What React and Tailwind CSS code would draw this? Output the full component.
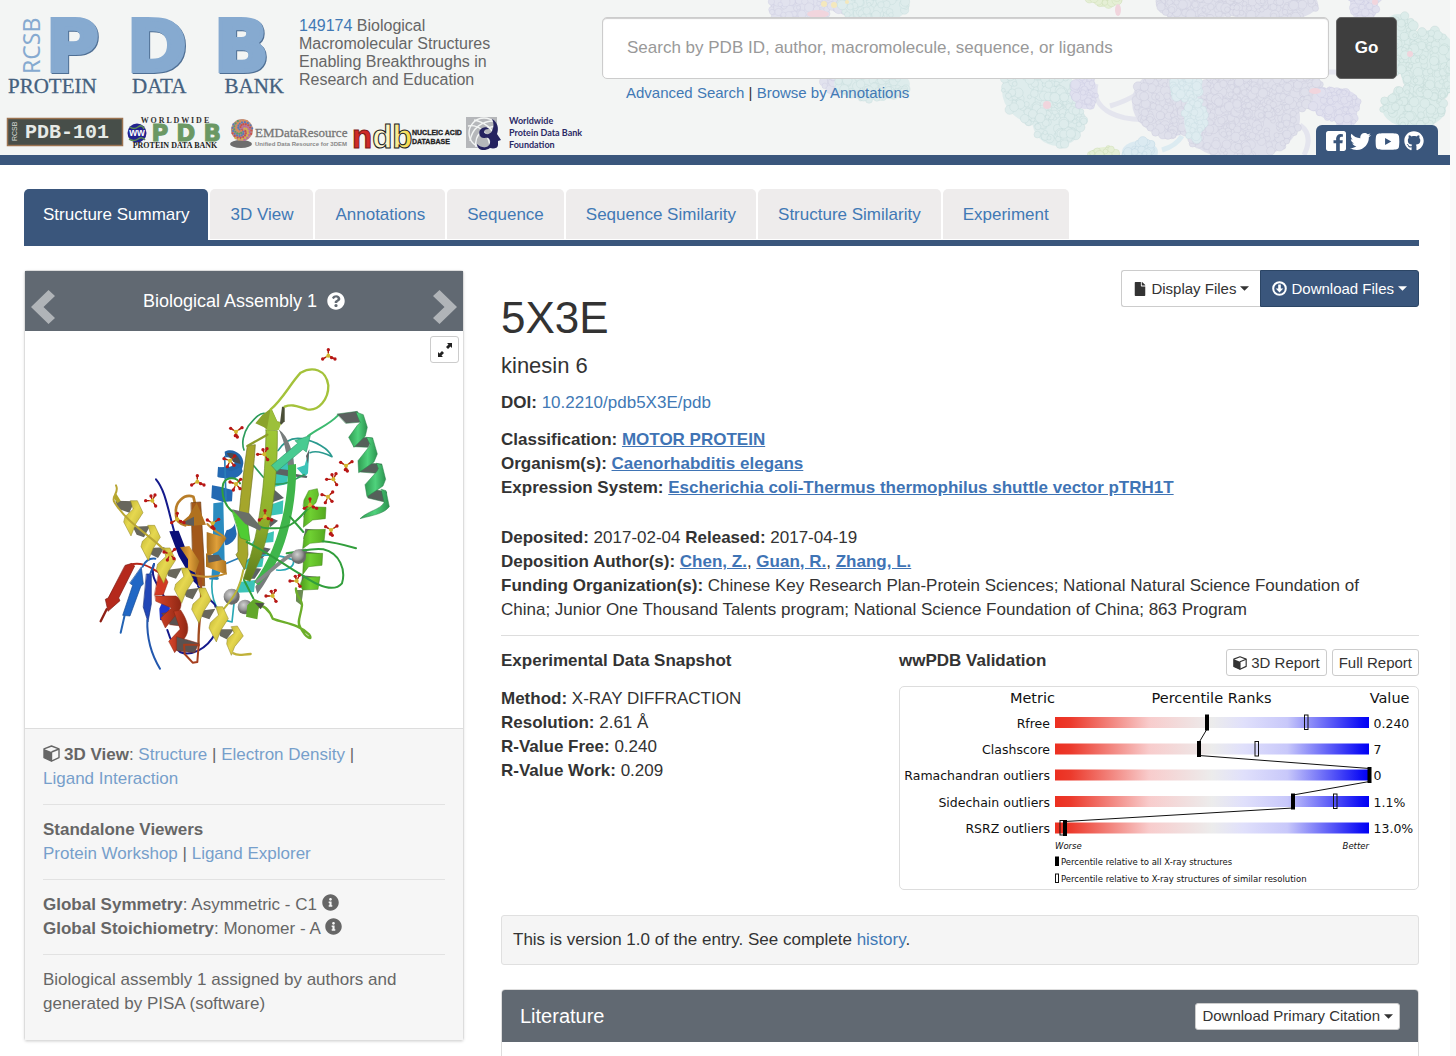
import React from "react";
import { FaFile, FaGithub, FaInfoCircle, FaQuestionCircle, FaTwitter, FaYoutube } from "react-icons/fa";

const SANS = "Liberation Sans, Arial, sans-serif";
const SERIF = "Liberation Serif, Times New Roman, serif";
const DEJAVU = "DejaVu Sans, Verdana, sans-serif";

const link = "text-[#4179b5] hover:underline";
const softLink = "text-[#769fcb] hover:underline";
const boldLink = "font-bold text-[#3f74b5] underline";

/* ---------- header artwork ---------- */

const BLOBS = [
  { fill: "#e1e2ee", stroke: "#c9c9dc", parts: [[800, 4, 30, 22], [845, -4, 25, 14], [860, 84, 38, 10]] },
  { fill: "#deecec", stroke: "#bfd6d6", parts: [[875, 2, 34, 22], [872, 84, 38, 16]] },
  { fill: "#deecec", stroke: "#bcd3d3", parts: [[1038, 90, 36, 34], [1058, 120, 26, 26]] },
  { fill: "#e0e0ef", stroke: "#c4c4dc", parts: [[1085, 92, 12, 17]] },
  { fill: "#dfe0eb", stroke: "#c4c6d8", parts: [[1200, 0, 44, 20], [1270, 4, 48, 18], [1170, 102, 38, 34], [1240, 118, 60, 42], [1262, 90, 60, 26]] },
  { fill: "#deecf0", stroke: "#c2d6dc", parts: [[1186, 88, 16, 12], [1194, 118, 10, 22]] },
  { fill: "#e0e0ee", stroke: "#c6c6dc", parts: [[1336, 104, 24, 16], [1346, 120, 9, 14], [1364, 2, 14, 22]] },
  { fill: "#dcecea", stroke: "#b9d0cf", parts: [[1398, 44, 20, 30], [1430, 66, 30, 36], [1414, 108, 32, 20]] },
  { fill: "#e5efd5", stroke: "#c6d6a8", parts: [[1104, 156, 14, 9], [1104, -2, 16, 6]] },
  { fill: "#dbeaf1", stroke: "#b9d2de", parts: [[1140, 152, 18, 11]] },
];

function bumps(parts, seed) {
  let s = seed * 7919 + 13;
  const rnd = () => {
    s = (s * 16807) % 2147483647;
    return s / 2147483647;
  };
  const out = [];
  parts.forEach(([cx, cy, rx, ry]) => {
    const n = Math.round((rx * ry) / 9) + 14;
    for (let i = 0; i < n; i++) {
      const a = rnd() * Math.PI * 2;
      const d = Math.sqrt(rnd());
      out.push([cx + Math.cos(a) * d * rx, cy + Math.sin(a) * d * ry, 2 + rnd() * 3]);
    }
  });
  return out;
}

function HeaderArt() {
  return (
    <svg className="pointer-events-none absolute right-0 top-0" width="700" height="155" viewBox="750 0 700 155" aria-hidden="true">
      <g fill="none" stroke="#e4e5ee" strokeWidth="5">
        <path d="M1096 84C1090 110 1120 124 1160 118M1110 106C1130 100 1146 90 1152 78M1300 125q14 10 4 30M1328 72h20" />
        <path stroke="#dcebf1" d="M1162 150q14 -4 20 -14" />
      </g>
      {BLOBS.map((b, i) => (
        <g key={i}>
          {b.parts.map(([cx, cy, rx, ry], j) => (
            <ellipse key={j} cx={cx} cy={cy} rx={rx} ry={ry} fill={b.fill} />
          ))}
          {bumps(b.parts, i + 1).map(([x, y, r], j) => (
            <circle key={j} cx={x} cy={y} r={r} fill={b.fill} stroke={b.stroke} strokeWidth="0.5" strokeOpacity="0.65" />
          ))}
        </g>
      ))}
      <g fill="#f1d5dd">
        <ellipse cx="1118" cy="10" rx="3" ry="6" />
        <ellipse cx="818" cy="14" rx="11" ry="4" />
        <circle cx="1047" cy="105" r="4" />
        <circle cx="1410" cy="54" r="3" />
        <ellipse cx="1315" cy="91" rx="6" ry="3" />
        <circle cx="1375" cy="2" r="3" />
      </g>
      <g fill="#f4e8bc">
        <circle cx="834" cy="5" r="3" />
        <circle cx="824" cy="4" r="3" />
        <circle cx="847" cy="2" r="2" />
      </g>
    </svg>
  );
}

function PdbLogo() {
  return (
    <svg className="overflow-visible" width="278" height="77" viewBox="7 17 278 77" role="img" aria-label="RCSB Protein Data Bank">
      <text transform="translate(40 74) rotate(-90)" fontFamily="Noto Sans, sans-serif" fontSize="23" fill="#86aad0">RCSB</text>
      <g className="drop-shadow-[1px_1px_0_#4f6f94]" fontFamily={DEJAVU} fontWeight="700" fontSize="72" fill="#86aad0" stroke="#86aad0" strokeWidth="4" strokeLinejoin="miter">
        <text x="46" y="71">P</text>
        <text x="127" y="71">D</text>
        <text x="214" y="71">B</text>
      </g>
      <g fontFamily={SERIF} fontSize="21" fill="#44617f" stroke="#44617f" strokeWidth="0.3">
        <text x="8" y="93">PROTEIN</text>
        <text x="132" y="93">DATA</text>
        <text x="284" y="93" textAnchor="end">BANK</text>
      </g>
    </svg>
  );
}

function Pdb101Logo() {
  return (
    <svg className="overflow-visible" width="116" height="30" viewBox="7 117 116 30" role="img" aria-label="PDB-101">
      <rect x="7.500" y="118.500" width="115" height="27" fill="#474e49" stroke="#9b7350" strokeWidth="1.500" />
      <text transform="translate(17 141) rotate(-90)" fontFamily={SANS} fontSize="7" fill="#d8dcd8">RCSB</text>
      <text x="25" y="138" fontFamily="Liberation Mono, monospace" fontWeight="700" fontSize="20" fill="#e6eae6">PDB-101</text>
    </svg>
  );
}

function WwPdbLogo() {
  return (
    <svg className="overflow-visible" width="95" height="33" viewBox="127 117 95 33" role="img" aria-label="Worldwide Protein Data Bank">
      <text x="175" y="123" textAnchor="middle" fontFamily={SERIF} fontWeight="700" fontSize="8" fill="#333">W O R L D W I D E</text>
      <circle cx="137" cy="133" r="9.500" fill="#22228f" />
      <path d="M130 127q4 3 8 0t6 2M129 139q5 3 9 0t7 1" fill="none" stroke="#5b8f55" strokeWidth="1.500" />
      <text x="137" y="136" textAnchor="middle" fontFamily={SANS} fontWeight="700" fontSize="10" fill="#fff">ww</text>
      <text x="221" y="141" textAnchor="end" fontFamily={DEJAVU} fontWeight="700" fontSize="23" fill="#6b9863" stroke="#6b9863" strokeWidth="1">P D B</text>
      <text x="175" y="148" textAnchor="middle" fontFamily={SERIF} fontWeight="700" fontSize="8" fill="#222">PROTEIN DATA BANK</text>
    </svg>
  );
}

const DOT_COLORS = ["#c94f4f", "#5a9d6a", "#d8b24a", "#5a79b8", "#b56aa5", "#d98b55"];

function EmDataLogo() {
  const dots = [];
  for (let i = 0; i < 70; i++) {
    const a = i * 2.4;
    const d = Math.sqrt(i / 70) * 10.5;
    dots.push([242 + Math.cos(a) * d, 130 + Math.sin(a) * d, DOT_COLORS[(i * 5 + (i >> 2)) % 6]]);
  }
  return (
    <svg className="overflow-visible" width="120" height="33" viewBox="229 117 120 33" role="img" aria-label="EMDataResource">
      <ellipse cx="241" cy="144" rx="11" ry="4" fill="#6d6d6d" />
      <circle cx="242" cy="130" r="11" fill="#c0907c" />
      {dots.map(([x, y, c], i) => (
        <circle key={i} cx={x} cy={y} r="1.100" fill={c} />
      ))}
      <text x="255" y="137" fontFamily={SERIF} fontSize="13" fill="#777" stroke="#777" strokeWidth="0.300">EMDataResource</text>
      <text x="255" y="146" fontFamily={SANS} fontWeight="700" fontSize="6" fill="#888">Unified Data Resource for 3DEM</text>
    </svg>
  );
}

function NdbLogo() {
  return (
    <svg className="overflow-visible" width="108" height="33" viewBox="354 117 108 33" role="img" aria-label="Nucleic Acid Database">
      <defs>
        <linearGradient id="ndb-d">
          <stop offset="0" stopColor="#f4d83a" />
          <stop offset=".5" stopColor="#fffbe0" />
          <stop offset="1" stopColor="#f4d83a" />
        </linearGradient>
      </defs>
      <text x="353" y="148" fontFamily={SANS} fontWeight="700" fontSize="33" fill="#d02a26" stroke="#7c1a18" strokeWidth="1">
        n<tspan fill="url(#ndb-d)" stroke="#222">db</tspan>
      </text>
      <g fontFamily={SANS} fontWeight="700" fontSize="7" fill="#222" stroke="#222" strokeWidth="0.300">
        <text x="413" y="135">NUCLEIC ACID</text>
        <text x="413" y="144">DATABASE</text>
      </g>
    </svg>
  );
}

function FoundationLogo() {
  return (
    <svg className="overflow-visible" width="120" height="34" viewBox="465 117 120 34" role="img" aria-label="Worldwide Protein Data Bank Foundation">
      <rect x="466" y="117" width="31" height="31" fill="#b5b7ba" />
      <g fill="none" stroke="#f3f5f4" strokeWidth="1.400">
        <circle cx="484" cy="133" r="15" />
        <path d="M470 141C472 128 482 121 494 121M476 147C474 134 484 127 497 126M468 126C478 124 488 132 490 146M474 120C484 122 492 128 496 138" />
      </g>
      <path d="M492 119C498 122 499 129 497 134L501 140 498 141V145C498 148 494 149 490 148C484 152 477 150 477 144C482 149 489 148 490 143C491 139 488 137 485 138C480 139 478 133 480 130C482 127 487 126 489 129C486 129 484 130 484 132C485 135 490 135 492 131C494 127 494 123 492 119z" fill="#25235f" />
      <g fontFamily="Lato, sans-serif" fontWeight="700" fontSize="9" fill="#2b2a66">
        <text x="509" y="124">Worldwide</text>
        <text x="509" y="136">Protein Data Bank</text>
        <text x="509" y="148">Foundation</text>
      </g>
    </svg>
  );
}

/* ---------- small glyphs ---------- */

const Caret = () => (
  <svg width="9" height="5" viewBox="0 0 10 5" className="ml-1 inline-block align-middle" aria-hidden="true">
    <path d="M0 0h10L5 5z" fill="currentColor" />
  </svg>
);

const Chevron = ({ flip }) => (
  <svg width="24" height="34" viewBox="0 0 24 34" aria-hidden="true">
    <path d={flip ? "M6.500 0L24 17 6.500 34 0 28 11.500 17 0 6z" : "M17.500 0L0 17 17.500 34 24 28 12.500 17 24 6z"} fill="#b0b4b8" />
  </svg>
);

const Cube = ({ size, className }) => (
  <svg width={size} height={size} viewBox="0 0 17 17" className={className} aria-hidden="true">
    <path d="M8.500 1L16 3.800V12.600L8.500 16.200 1 12.600V3.800z" fill="none" stroke="currentColor" strokeWidth="1.400" strokeLinejoin="round" />
    <path d="M1 4L8.500 7V16.200L1 12.600z" fill="currentColor" />
    <path d="M8.500 7L16 4M8.500 7V16" stroke="currentColor" strokeWidth="1.400" />
  </svg>
);

const FacebookGlyph = () => (
  <svg width="20" height="20" viewBox="0 128 1536 1536" aria-hidden="true">
    <path
      fill="currentColor"
      d="M1368 128q70 0 119 49t49 119v1200q0 70-49 119t-119 49h-308v-595h199l30-232h-229V689q0-56 23.500-84t91.500-28l122-1V369q-63-9-178-9-136 0-217.500 80T777 666v171H577v232h200v595H168q-70 0-119-49T0 1496V296q0-70 49-119t119-49z"
    />
  </svg>
);

const DownloadGlyph = () => (
  <svg width="15" height="15" viewBox="0 0 15 15" className="mr-1" aria-hidden="true">
    <circle cx="7.500" cy="7.500" r="6.300" fill="none" stroke="currentColor" strokeWidth="2" />
    <path d="M6.200 3.500h2.600v4h2.500L7.500 11.500 3.700 7.500h2.500z" fill="currentColor" />
  </svg>
);

const ExpandGlyph = () => (
  <svg width="16" height="16" viewBox="0 0 16 16" aria-hidden="true">
    <path d="M10 1h5v5l-1.500-1.500L11 7 9 5l2.500-2.500zM6 15H1v-5l1.500 1.500L5 9l2 2-2.500 2.500z" fill="#222" />
  </svg>
);

/* ---------- molecule ---------- */

const SULFATES = [
  [468, 275, 0], [450, 362, 1], [352, 425, 2], [217, 482, 3], [468, 432, 1], [553, 343, 3], [555, 530, 2],
  [398, 550, 0], [270, 642, 1], [578, 768, 3], [292, 538, 2], [745, 47, 2], [798, 377, 0], [760, 418, 3],
  [744, 470, 1], [690, 495, 2], [753, 570, 0], [650, 723, 3],
];

const ARMS = [
  [[-16, -10], [18, -12], [4, 16], [-2, 12]],
  [[-18, -6], [14, -14], [12, 14], [-8, 18]],
  [[0, -18], [-17, 10], [20, 10], [10, 6]],
  [[-20, 0], [8, -17], [10, 16], [-4, -14]],
];

function Sulfate({ x, y, kind }) {
  return (
    <g>
      {ARMS[kind].map(([dx, dy], i) => (
        <g key={i}>
          <path d={`M${x} ${y}l${dx} ${dy}`} stroke="#c9ae2c" strokeWidth="4" />
          <path d={`M${x + dx / 2} ${y + dy / 2}L${x + dx} ${y + dy}`} stroke="#b01818" strokeWidth="4" />
          <circle cx={x + dx} cy={y + dy} r="5" fill="#b81616" />
        </g>
      ))}
      <circle cx={x} cy={y} r="6" fill="#d3b62f" />
    </g>
  );
}

const YELLOW_TURNS = [[152, 482], [204, 556], [250, 624], [304, 684], [356, 744], [408, 800]];

function Molecule() {
  return (
    <svg className="mx-auto block w-full max-w-[438px]" viewBox="25 331 438 397" role="img" aria-label="Biological assembly 1 of 5X3E">
      <defs>
        <linearGradient id="m-green" x1="0" x2="1"><stop offset="0" stopColor="#2f9c52" /><stop offset=".5" stopColor="#4fd27c" /><stop offset="1" stopColor="#2c9450" /></linearGradient>
        <linearGradient id="m-lime" x1="0" x2="1"><stop offset="0" stopColor="#4c9a1c" /><stop offset=".4" stopColor="#6fd032" /><stop offset="1" stopColor="#54a81f" /></linearGradient>
        <linearGradient id="m-yellow" x1="0" x2="1" y2="1"><stop offset="0" stopColor="#b3a62a" /><stop offset=".45" stopColor="#e6d850" /><stop offset="1" stopColor="#b5a82c" /></linearGradient>
        <linearGradient id="m-red" x1="0" x2="1"><stop offset="0" stopColor="#d8452a" /><stop offset="1" stopColor="#8f2814" /></linearGradient>
        <linearGradient id="m-orange" x1="0" x2="1"><stop offset="0" stopColor="#a86f1e" /><stop offset=".5" stopColor="#dfa03a" /><stop offset="1" stopColor="#a8701f" /></linearGradient>
        <linearGradient id="m-olive" x1="0" y1="0" x2="0" y2="1"><stop offset="0" stopColor="#9fc737" /><stop offset=".6" stopColor="#8fae2b" /><stop offset="1" stopColor="#5f7d1c" /></linearGradient>
        <radialGradient id="m-zinc" cx=".4" cy=".35"><stop offset="0" stopColor="#d0d0d0" /><stop offset=".7" stopColor="#969696" /><stop offset="1" stopColor="#6a6a6a" /></radialGradient>
      </defs>
      <g transform="translate(80 340) scale(.33333)" strokeLinejoin="round" strokeLinecap="round">
        {/* cyan helix and strands at the back */}
        <g fill="#3cc4b8">
          <path d="M576 378l46-14 18-12v50l-56 12zM580 405l45-5-3 32-38 8zM575 493l35-12-2 40-38 6zM530 590l52-16-2 32-66 6zM495 660l56-6-4 26-58 8zM478 726l48-6-4 36-52 2z" />
          <path d="M650 384l24-8 14-48-4 72-10 10z" />
        </g>
        <g fill="#5c6263">
          <path d="M583 385l48 6-6 18-42-8zM580 446l32 28-38 14zM562 528l32 14-24 20zM532 618l40 8-26 30-30-10zM678 348l10-20-4 44zM648 402l34 6-2 6-32-4zM502 682l42 4-20 30-28 0z" />
        </g>
        <g fill="none" strokeWidth="5">
          <path stroke="#2a9a8f" d="M594 332C615 300 640 292 665 296C710 305 745 325 756 350C740 342 710 330 690 338" />
          <path stroke="#2d9c5c" d="M560 222C540 212 520 240 505 258C490 280 484 310 492 330M520 376L550 412M585 432C620 436 650 415 672 404" />
          <path stroke="#2aa8b5" d="M500 665C520 640 590 640 640 660C645 680 620 694 590 690M398 710C390 760 400 800 440 842L456 846L462 790" />
        </g>
        {/* blue helix */}
        <path d="M434 335C460 320 492 345 490 370C486 400 470 420 448 416L414 412L418 382L450 380C470 378 470 352 436 352z" fill="#2264a8" />
        <path d="M440 340C465 335 480 350 482 372L460 366C450 352 446 350 440 340z" fill="#474b52" />
        <path d="M414 380l40 14 30-14 4 14c-8 16-24 24-44 22l-32-6zM396 436l24 4 38 10-2 34-28 2-34-12zM440 570c16-2 26-16 24-22l6 34c-2 18-20 32-34 34l-6-22z" fill="#2369b2" />
        <path d="M400 490l30-4 4 176-22 58-18-4 4-60z" fill="#2a8bbf" />
        <path d="M434 350l4 130M390 716l24 0M440 670l32-14" stroke="#2a7db8" strokeWidth="5" fill="none" />
        {/* navy strand and coils */}
        <g fill="none" stroke="#141a8c" strokeWidth="6">
          <path d="M228 418C255 450 262 500 282 572M354 738C380 780 410 790 406 800M406 880C380 930 330 950 300 936C280 920 268 890 262 870M256 776C230 730 210 710 222 672" />
        </g>
        <path d="M268 574l28-2 26 68 34 84-2 14-14-14-44-76z" fill="#0b0f78" />
        <path d="M238 806l14-32 18 30-10 38-20-2z" fill="#1f36cf" />
        {/* green and lime strands */}
        <path d="M596 268C640 300 656 390 634 500C618 610 580 700 532 762L526 740C590 650 626 520 626 430C626 360 616 310 596 268z" fill="#777c7c" />
        <path d="M624 376l24-4c4 120-30 250-68 310l-44 54-14-10c60-80 104-210 102-350z" fill="#3fb54b" />
        <path d="M676 632C630 630 580 690 532 724" stroke="#858888" strokeWidth="11" fill="none" />
        <path d="M502 318l24-4c-6 110-30 220-22 330l-10 46-26-46 6-8c-2-110 14-220 28-318z" fill="#a5a62b" stroke="#6f741f" strokeWidth="2" />
        <path d="M558 270l34 2c2 150-20 300-52 386l-30 66-20-8c50-140 66-290 68-446z" fill="url(#m-olive)" stroke="#6c8a25" strokeWidth="2" />
        <path d="M526 250l20-24 28-22 18 40 10 2-36 28-14-12z" fill="#8ba32c" />
        <path d="M572 204l20 42 12 4-8 20-36 2z" fill="#9cc03a" />
        <path d="M600 250l6-50 8 0 0 44-10 10z" fill="#4b4f38" />
        <path d="M502 318l60-34" stroke="#8c9c2a" strokeWidth="7" />
        <path d="M572 208C605 182 632 130 662 98C698 78 738 88 745 136C746 178 716 214 682 208C656 202 640 190 614 200" stroke="#a4c23a" strokeWidth="7" fill="none" />
        {/* blue-green arrow and right helix */}
        <path d="M575 376l78-66-8-8 46-16-12 50-10-8-78 66z" fill="#48cb91" stroke="#319a6c" strokeWidth="2" />
        <path d="M684 288C715 264 745 256 774 226" stroke="#3dba70" strokeWidth="6" fill="none" />
        <g stroke="#287d46" strokeWidth="1.500">
          <path d="M772 222l60-8 16 32-50 4z" fill="#5c615f" />
          <path d="M820 290l58 4-14 28-42-2z" fill="#55605a" />
          <path d="M844 368l62 4-16 28-50-4z" fill="#55605a" />
          <path d="M862 444l58 12-6 30-50-12z" fill="#55605a" />
          <path d="M828 216l22 8 12 38-6 26-34 34-16-30 26-36 8-8z" fill="url(#m-green)" />
          <path d="M860 292l18 2 14 48-10 24-46 32-2-36 32-40 4-8z" fill="url(#m-green)" />
          <path d="M890 370l16 4 11 44-8 20-48 32-6-36 36-40 4-8z" fill="url(#m-green)" />
          <path d="M904 448l14 4 10 48c-16 20-40 24-88 36 24-24 60-26 72-48z" fill="url(#m-green)" />
        </g>
        {/* lime helix */}
        <g fill="#666b66">
          <path d="M678 496l42 8-30 34-20-6zM676 566l44 4-34 34-16-8zM670 634l50 6-32 36-18-8zM666 706l44 4-30 34-16-10z" />
        </g>
        <g fill="url(#m-lime)" stroke="#3e8417" strokeWidth="1.500">
          <path d="M672 480l14-28 26-6 4 18-8 24-24 22-14-10zM684 500l54 2-2 34-38 4-28 22 2-34zM684 570l52-2-4 38-42 4-22 16 4-36zM678 640l50 0-2 36-40 4-18 24 2-40zM672 712l48-2-6 38-46 2-8-16z" />
        </g>
        <g fill="none" strokeWidth="6" stroke="#319e3c">
          <path d="M728 604C760 606 790 614 828 625M500 606C570 640 620 680 664 704C710 736 760 760 786 730C798 690 780 640 730 628C700 622 670 634 620 640M680 510C660 530 640 560 600 564C570 566 550 566 540 560M630 530L670 576" />
          <path d="M456 514C440 500 420 470 430 430C440 410 470 410 480 430M492 720L520 775" />
        </g>
        <path d="M456 510l46 34 8 60-28-10z" fill="#4fcc33" stroke="#39962a" strokeWidth="2" />
        <path d="M456 508l52 12 36 42-4 10-44-20z" fill="#6a6f68" />
        <path d="M648 750l22 0-6 46-16-12z" fill="#6b8b54" />
        <path d="M648 745C645 765 668 780 666 796C662 830 650 845 660 860C680 900 700 900 688 884C655 850 610 850 578 836C570 815 555 795 530 795" stroke="#6cae2a" strokeWidth="7" fill="none" />
        {/* zinc spheres */}
        <circle cx="656" cy="650" r="22" fill="url(#m-zinc)" />
        <circle cx="455" cy="770" r="24" fill="url(#m-zinc)" />
        <circle cx="495" cy="801" r="22" fill="url(#m-zinc)" />
        <path d="M502 796l20-20 30 12-16 18-4 32-34-8z" fill="#62a72b" />
        <path d="M524 788l30 2-12 18z" fill="#4a5042" />
        <path d="M490 690C480 740 470 760 432 806" stroke="#b9b338" strokeWidth="6" fill="none" />
        {/* orange strand and ribbon */}
        <path d="M348 560C345 520 350 500 340 470C310 460 285 490 288 516C286 545 300 550 316 556" stroke="#b87d28" strokeWidth="8" fill="none" />
        <path d="M334 488l28-2 10 174 2 78-18-2-18-76z" fill="#a2581a" stroke="#6f3d10" strokeWidth="2" />
        <path d="M360 700C372 780 352 860 356 916" stroke="#a14c20" strokeWidth="7" fill="none" />
        <path d="M350 488l28 66-54 4-24-8 26-22z" fill="#b0711f" />
        <path d="M304 550l38-20 0 28z" fill="#5b5c5c" />
        <path d="M380 576l60 18-26 40-32 16-2-30z" fill="url(#m-orange)" />
        <path d="M378 640l60 24 2 40-62-24z" fill="url(#m-orange)" />
        <path d="M382 646l34-2 10 16-40 8z" fill="#5d5b58" />
        <path d="M438 700C400 716 350 712 310 696M382 552C400 572 420 580 434 592" stroke="#c08a2e" strokeWidth="6" fill="none" />
        <path d="M300 622l28-4 30 46-12 34-22-10 0-30z" fill="url(#m-orange)" />
        {/* left strands */}
        <path d="M136 676l20-6 8 8-48 96 4 8-36 32-8-36 8-4z" fill="#b5291c" stroke="#7c1a12" strokeWidth="2" />
        <path d="M80 808L62 844" stroke="#8e2015" strokeWidth="7" />
        <path d="M152 674C190 662 220 690 250 704" stroke="#b5291c" strokeWidth="6" fill="none" />
        <path d="M184 682l6 50-8 8-32 88-22-2 30-90-8-6z" fill="#2167c5" stroke="#174a91" strokeWidth="2" />
        <path d="M134 826L122 878M188 680C196 662 210 654 226 656" stroke="#2363b4" strokeWidth="6" fill="none" />
        <path d="M200 702l14 0 0 90-10 54-14-44z" fill="#2247b6" stroke="#182f7b" strokeWidth="2" />
        <path d="M202 840C200 900 215 945 240 986M210 704L222 672" stroke="#2358ae" strokeWidth="6" fill="none" />
        {/* red helix */}
        <g stroke="#8c2612" strokeWidth="1.500">
          <path d="M236 700l14 0 14 26-14 38-26 2z" fill="#d23a24" />
          <path d="M246 820l54-6 20 46-50-6z" fill="#5b5250" />
          <path d="M226 768l62 0c20 10 18 32 8 46l-40 50-14-30 32-30-46-20z" fill="url(#m-red)" />
          <path d="M282 814l20-4c20 30 28 56 16 78l-34 50-18-34 34-36z" fill="url(#m-red)" />
          <path d="M290 890l66 20-12 28-54-6z" fill="#5b5250" />
          <path d="M312 914l44 0-4 52-14 2-24-26z" fill="none" stroke="#a53e1e" strokeWidth="6" />
        </g>
        {/* long yellow helix */}
        <g fill="#68675c">
          <path d="M106 482l58 2-16 34-34-12zM158 560l52-2-18 34-22-8zM206 624l48-2-20 32-20-10zM258 690l48-6-18 32-24-8zM308 750l48-6-18 34-20-8zM360 812l46-6-18 32-22-8zM414 868l48 0-22 30-20-10z" />
        </g>
        <path d="M100 472l8-12 14 22-10 8z" fill="#b3a62a" />
        {YELLOW_TURNS.map(([x, y]) => (
          <path key={x} d={`M${x} ${y}l20 0 17 36-22 34-14 36-22-42 4-16 24-22z`} fill="url(#m-yellow)" stroke="#8f8424" strokeWidth="1.500" />
        ))}
        <path d="M454 860l18-2 18 30-26 32-10 26-14-34 2-16 20-16z" fill="url(#m-yellow)" stroke="#8f8424" strokeWidth="1.500" />
        <path d="M108 436C120 460 90 470 104 488C150 560 220 590 262 640" stroke="#b9a634" strokeWidth="6" fill="none" />
        <path d="M460 940C475 950 490 942 512 942" stroke="#c0b13a" strokeWidth="7" fill="none" />
        {SULFATES.map(([x, y, k], i) => (
          <Sulfate key={i} x={x} y={y} kind={k} />
        ))}
      </g>
    </svg>
  );
}

/* ---------- validation chart ---------- */

const METRICS = [
  { name: "Rfree", value: "0.240", y: 73, all: 616, similar: 814 },
  { name: "Clashscore", value: "7", y: 126, all: 600, similar: 715 },
  { name: "Ramachandran outliers", value: "0", y: 178, all: 941 },
  { name: "Sidechain outliers", value: "1.1%", y: 231, all: 788, similar: 872 },
  { name: "RSRZ outliers", value: "13.0%", y: 284, all: 332, similar: 325 },
];

function ValidationChart() {
  return (
    <svg className="block w-full" viewBox="2 2 1036 404" fontFamily={DEJAVU} fill="#111" role="img" aria-label="Percentile ranks">
      <defs>
        <linearGradient id="rank">
          <stop offset="0" stopColor="#ec2f20" />
          <stop offset=".05" stopColor="#ec3a2c" />
          <stop offset=".3" stopColor="#f8cccc" />
          <stop offset=".5" stopColor="#ececec" />
          <stop offset=".6" stopColor="#e0e0fb" />
          <stop offset=".74" stopColor="#c8c8fa" />
          <stop offset=".97" stopColor="#1212f5" />
          <stop offset="1" stopColor="#0000f5" />
        </linearGradient>
      </defs>
      <g fontSize="29">
        <text x="312" y="33" textAnchor="end">Metric</text>
        <text x="625" y="33" textAnchor="middle">Percentile Ranks</text>
        <text x="1021" y="33" textAnchor="end">Value</text>
      </g>
      {METRICS.map((m) => (
        <g key={m.name} fontSize="25">
          <text x="302" y={m.y + 10} textAnchor="end">{m.name}</text>
          <rect x="312" y={m.y - 11} width="628" height="22" fill="url(#rank)" />
          <text x="949" y={m.y + 10}>{m.value}</text>
        </g>
      ))}
      {METRICS.slice(1).map((m, i) => (
        <line key={m.name} x1={METRICS[i].all} y1={METRICS[i].y + 13} x2={m.all} y2={m.y - 13} stroke="#111" strokeWidth="2" />
      ))}
      {METRICS.map((m) => (
        <g key={m.name}>
          {m.similar && <rect x={m.similar - 3} y={m.y - 15} width="7" height="29" fill="none" stroke="#111" strokeWidth="2" />}
          <rect x={m.all - 4} y={m.y - 16} width="8" height="32" fill="#000" />
        </g>
      ))}
      <g fontSize="17">
        <text x="312" y="325" fontStyle="italic">Worse</text>
        <text x="940" y="325" textAnchor="end" fontStyle="italic">Better</text>
        <rect x="312" y="341" width="8" height="19" fill="#000" />
        <text x="324" y="358">Percentile relative to all X-ray structures</text>
        <rect x="313" y="376" width="6" height="17" fill="none" stroke="#111" strokeWidth="2" />
        <text x="324" y="392">Percentile relative to X-ray structures of similar resolution</text>
      </g>
    </svg>
  );
}

/* ---------- page ---------- */

const TABS = ["Structure Summary", "3D View", "Annotations", "Sequence", "Sequence Similarity", "Structure Similarity", "Experiment"];

const Rule = () => <hr className="my-[13px] border-[#e2e2e2]" />;

function Header() {
  return (
    <header className="relative flex border-b-[10px] border-[#3a567c] bg-[#f3f5f4] pb-1">
      <HeaderArt />
      <div className="w-[602px] shrink-0 pl-[7px] pt-[17px]">
        <div className="flex gap-[14px]">
          <a href="#home"><PdbLogo /></a>
          <p className="text-[16px] leading-[18px] text-[#666]">
            <a href="#count" className={link}>149174</a> Biological
            <br />Macromolecular Structures
            <br />Enabling Breakthroughs in
            <br />Research and Education
          </p>
        </div>
        <div className="mt-[23px] flex gap-1">
          <a href="#pdb101"><Pdb101Logo /></a>
          <a href="#wwpdb"><WwPdbLogo /></a>
          <a href="#emdb" className="ml-[3px]"><EmDataLogo /></a>
          <a href="#ndb"><NdbLogo /></a>
          <a href="#foundation"><FoundationLogo /></a>
        </div>
      </div>
      <div className="relative min-w-0 flex-1 pr-[53px] pt-[17px]">
        <form className="flex gap-[7px]" onSubmit={(e) => e.preventDefault()}>
          <input
            type="text"
            aria-label="Search"
            placeholder="Search by PDB ID, author, macromolecule, sequence, or ligands"
            className="h-[62px] min-w-0 flex-1 rounded-[5px] border border-[#ccc] bg-white px-6 text-[17px] text-[#555] shadow-[inset_0_1px_1px_#ccc] placeholder:text-[#999]"
          />
          <button className="h-[62px] w-[61px] rounded-[5px] border border-[#666] bg-[#3e3e3e] text-[17px] font-bold text-white">Go</button>
        </form>
        <p className="pl-6 pt-1 text-[15px] leading-5 text-[#333]">
          <a href="#advanced" className={link}>Advanced Search</a> | <a href="#browse" className={link}>Browse by Annotations</a>
        </p>
      </div>
      <div className="absolute bottom-0 right-3 flex h-[30px] items-center gap-1 rounded-t-[6px] bg-[#3a567c] pl-[10px] pr-[14px] pt-0.5 text-white">
        <a href="#facebook" aria-label="Facebook"><FacebookGlyph /></a>
        <a href="#twitter" aria-label="Twitter"><FaTwitter size={21} /></a>
        <a href="#youtube" aria-label="YouTube"><FaYoutube size={25} /></a>
        <a href="#github" aria-label="GitHub"><FaGithub size={20} /></a>
      </div>
    </header>
  );
}

function AssemblyPanel() {
  return (
    <aside className="w-[440px] shrink-0 self-start rounded-[3px] border border-[#ddd] shadow-sm">
      <div className="flex h-[60px] items-center justify-between bg-[#616972] px-1 text-white">
        <button aria-label="Previous assembly" className="mt-3 pl-0.5"><Chevron /></button>
        <h2 className="flex items-center gap-2.5 text-[18px]">
          Biological Assembly 1 <FaQuestionCircle size={18} />
        </h2>
        <button aria-label="Next assembly" className="mt-3 pr-0.5"><Chevron flip /></button>
      </div>
      <div className="relative">
        <Molecule />
        <button aria-label="Full size" className="absolute right-1 top-[5px] flex h-[27px] w-[29px] items-center justify-center rounded-[3px] border border-[#ccc] bg-white">
          <ExpandGlyph />
        </button>
      </div>
      <div className="border-t border-[#ddd] bg-[#f6f6f6] px-[18px] pb-6 pt-[14px] text-[17px] leading-6 text-[#666]">
        <p>
          <Cube size={17} className="mr-1 inline-block align-[-2px]" />
          <b>3D View</b>: <a href="#structure" className={softLink}>Structure</a> | <a href="#density" className={softLink}>Electron Density</a> |
          <br /><a href="#ligand" className={softLink}>Ligand Interaction</a>
        </p>
        <Rule />
        <p>
          <b>Standalone Viewers</b>
          <br /><a href="#workshop" className={softLink}>Protein Workshop</a> | <a href="#explorer" className={softLink}>Ligand Explorer</a>
        </p>
        <Rule />
        <p>
          <b>Global Symmetry</b>: Asymmetric - C1 <FaInfoCircle size={17} className="inline-block align-[-1px]" />
          <br /><b>Global Stoichiometry</b>: Monomer - A <FaInfoCircle size={17} className="inline-block align-[-1px]" />
        </p>
        <Rule />
        <p>Biological assembly 1 assigned by authors and<br />generated by PISA (software)</p>
      </div>
    </aside>
  );
}

export default function App() {
  return (
    <div className="h-screen overflow-hidden bg-[#fafafa] pr-[6px] font-['Liberation_Sans',Arial,sans-serif] text-[#333]">
      <div className="min-h-full bg-white">
        <Header />
        <main className="pl-6 pr-[31px] pt-6">
          <nav className="flex gap-0.5 border-b-[6px] border-[#3a567c] text-[17px]">
            {TABS.map((t, i) => (
              <a
                key={t}
                href="#tab"
                className={
                  i === 0
                    ? "flex h-[51px] items-center rounded-t-[5px] bg-[#3a567c] px-[19px] text-white"
                    : "mb-px flex h-[50px] items-center rounded-t-[5px] bg-[#eeecec] px-5 pt-0.5 text-[#4179b5]"
                }
              >
                {t}
              </a>
            ))}
          </nav>
          <div className="flex gap-[37px] pt-6">
            <AssemblyPanel />
            <section className="min-w-0 flex-1 text-[17px] leading-6">
              <div className="flex items-start justify-between">
                <h1 className="mt-6 text-[44px] leading-[48px]">5X3E</h1>
                <div className="flex text-[15px]">
                  <button className="flex h-[37px] items-center rounded-l-[3px] border border-r-0 border-[#ccc] px-[11px]">
                    <FaFile size={14} className="mr-1" />Display Files<Caret />
                  </button>
                  <button className="flex h-[37px] items-center rounded-r-[3px] border border-[#2b4565] bg-[#3a567c] px-[11px] text-white">
                    <DownloadGlyph />Download Files<Caret />
                  </button>
                </div>
              </div>
              <h2 className="mt-3 text-[22px]">kinesin 6</h2>
              <p className="mt-[13px]"><b>DOI:</b> <a href="#doi" className={link}>10.2210/pdb5X3E/pdb</a></p>
              <p className="mt-[13px]">
                <b>Classification:</b> <a href="#class" className={boldLink}>MOTOR PROTEIN</a>
                <br /><b>Organism(s):</b> <a href="#organism" className={boldLink}>Caenorhabditis elegans</a>
                <br /><b>Expression System:</b> <a href="#expression" className={boldLink}>Escherichia coli-Thermus thermophilus shuttle vector pTRH1T</a>
              </p>
              <p className="mt-[26px] pr-6">
                <b>Deposited:</b> 2017-02-04 <b>Released:</b> 2017-04-19
                <br /><b>Deposition Author(s):</b> <a href="#chen" className={boldLink}>Chen, Z.</a>, <a href="#guan" className={boldLink}>Guan, R.</a>, <a href="#zhang" className={boldLink}>Zhang, L.</a>
                <br /><b>Funding Organization(s):</b> Chinese Key Research Plan-Protein Sciences; National Natural Science Foundation of China; Junior One Thousand Talents program; National Science Foundation of China; 863 Program
              </p>
              <hr className="my-[13px] border-[#ddd]" />
              <div className="flex">
                <div className="min-w-0 flex-1">
                  <h3 className="font-bold">Experimental Data Snapshot</h3>
                  <p className="mt-[14px]">
                    <b>Method:</b> X-RAY DIFFRACTION
                    <br /><b>Resolution:</b> 2.61 Å
                    <br /><b>R-Value Free:</b> 0.240
                    <br /><b>R-Value Work:</b> 0.209
                  </p>
                </div>
                <div className="w-[520px] shrink-0">
                  <div className="flex items-start justify-between">
                    <h3 className="font-bold">wwPDB Validation</h3>
                    <div className="flex gap-[5px] text-[15px]">
                      <button className="flex h-[27px] items-center rounded-[3px] border border-[#ccc] px-1.5"><Cube size={14} className="mr-1" />3D Report</button>
                      <button className="flex h-[27px] items-center rounded-[3px] border border-[#ccc] px-1.5">Full Report</button>
                    </div>
                  </div>
                  <div className="mt-[10px] rounded-[5px] border border-[#ddd]"><ValidationChart /></div>
                </div>
              </div>
              <div className="mt-[25px] rounded-[3px] border border-[#e0e0e0] bg-[#f5f5f5] px-[11px] py-3">
                This is version 1.0 of the entry. See complete <a href="#history" className={link}>history</a>.
              </div>
              <div className="mt-6 h-40 rounded-[4px] border border-[#ddd]">
                <div className="flex h-[52px] items-center justify-between rounded-t-[3px] bg-[#616972] px-[18px]">
                  <h2 className="text-[20px] text-white">Literature</h2>
                  <button className="flex h-[27px] items-center rounded-[3px] border border-[#ccc] bg-white px-1.5 text-[15px]">Download Primary Citation<Caret /></button>
                </div>
              </div>
            </section>
          </div>
        </main>
      </div>
    </div>
  );
}
